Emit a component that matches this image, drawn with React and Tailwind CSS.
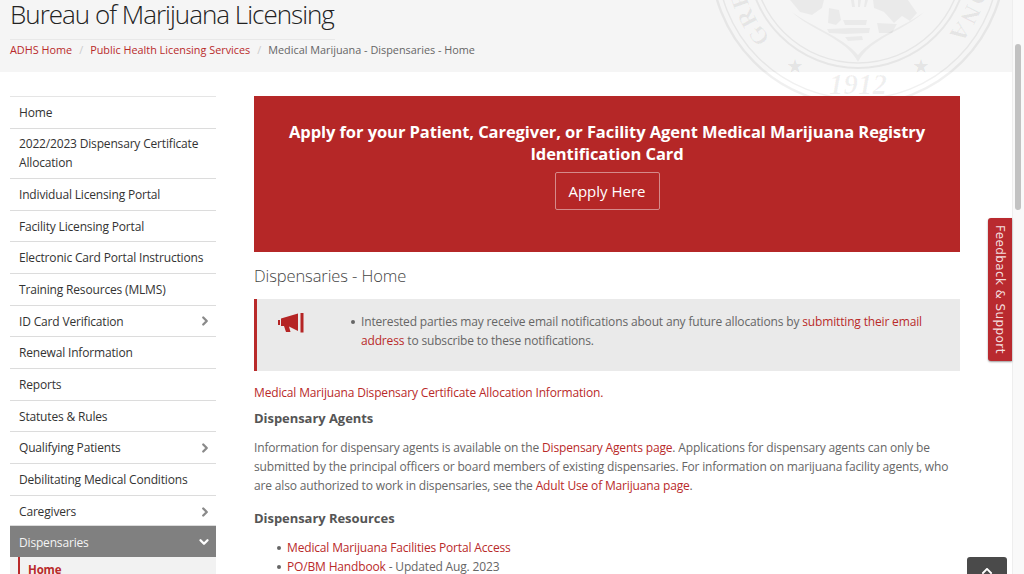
import React from 'react';
import { ChevronRight, ChevronDown } from 'lucide-react';
import { FaChevronUp } from 'react-icons/fa';

const navItems = [
  { label: 'Home', h: 'h-[32px]' },
  { label: '2022/2023 Dispensary Certificate Allocation', h: 'h-[50px] pb-[2px]' },
  { label: 'Individual Licensing Portal', h: 'h-[32px]' },
  { label: 'Facility Licensing Portal', h: 'h-[31px]' },
  { label: 'Electronic Card Portal Instructions', h: 'h-[32px]' },
  { label: 'Training Resources (MLMS)', h: 'h-[32px]' },
  { label: 'ID Card Verification', h: 'h-[31px]', arrow: true },
  { label: 'Renewal Information', h: 'h-[32px]' },
  { label: 'Reports', h: 'h-[32px]' },
  { label: 'Statutes & Rules', h: 'h-[31px]' },
  { label: 'Qualifying Patients', h: 'h-[32px]', arrow: true },
  { label: 'Debilitating Medical Conditions', h: 'h-[32px]' },
  { label: 'Caregivers', h: 'h-[30px] pt-[2px]', arrow: true },
];

// Watermark seal, drawn in page coordinates through the viewBox
const Seal = () => (
  <svg
    className="absolute left-[698px] top-0 pointer-events-none"
    width="314"
    height="96"
    viewBox="698 0 314 96"
    fill="none"
    aria-hidden="true"
  >
    <defs>
      <path id="sealArc" d="M771 38 A118 118 0 1 1 945 38" />
    </defs>
    <g stroke="#000" strokeOpacity="0.06">
      <circle cx="858" cy="-42" r="147" strokeWidth="2.5" />
      <circle cx="858" cy="-42" r="141" strokeWidth="1.5" />
      <circle cx="858" cy="-42" r="110" strokeWidth="2" />
      <circle cx="858" cy="-42" r="105" strokeWidth="1.5" />
    </g>
    <g fill="#000" fillOpacity="0.045">
      <path d="M790 0 L824 0 L822 8 L812 15 L800 12 Z" />
      <path d="M873 0 L908 0 L917 13 L910 21 L902 16 L894 23 L884 12 L874 8 Z" />
      <path d="M829 8 L839 10 L841 20 L836 25 L828 23 Z" />
      <path d="M851 0 L854 0 L855 7 L852 7 Z M858 0 L861 0 L860 7 L858 7 Z M865 0 L868 0 L866 7 L864 7 Z" />
      <path d="M843 20 L867 20 L866 25 L845 25 Z" />
      <path d="M827 29 L850 28 L870 28 L869 33 L845 34 L829 33 Z" />
      <path d="M845 37 L862 36 L863 40 L848 41 Z" />
      <path d="M877 23 L897 24 L892 33 L879 33 Z" />
      <path d="M792 12 C810 30 846 38 858 62 C870 38 906 30 924 12 C906 26 874 36 858 55 C842 36 810 26 792 12 Z" />
    </g>
    <text fontFamily="'Liberation Serif', serif" fontSize="24" fontWeight="700" fill="#000" fillOpacity="0.06">
      <textPath href="#sealArc" textLength="540" lengthAdjust="spacing">GREAT SEAL OF THE STATE OF ARIZONA</textPath>
    </text>
    <text x="858" y="94" textAnchor="middle" fontFamily="'Liberation Serif', serif" fontSize="29" fontWeight="700" fontStyle="italic" fill="#000" fillOpacity="0.06">1912</text>
    <text x="795" y="73" textAnchor="middle" fontFamily="'DejaVu Sans', sans-serif" fontSize="20" fill="#000" fillOpacity="0.07">★</text>
    <text x="921" y="73" textAnchor="middle" fontFamily="'DejaVu Sans', sans-serif" fontSize="20" fill="#000" fillOpacity="0.07">★</text>
  </svg>
);

const Bullhorn = () => (
  <svg width="26" height="20" viewBox="0 0 26 20" fill="#b52525" aria-hidden="true">
    <rect x="0" y="7" width="2" height="5" />
    <path d="M3 5.5 L20 0.5 L20 18 L11 13.5 L12.5 19 L8 19 L6 13 L3 13 Z" />
    <rect x="22.5" y="0" width="3" height="19.5" />
  </svg>
);

const Dot = () => <span className="shrink-0 w-[4px] h-[4px] mt-[8px] mr-[6px] rounded-full bg-[#666]" />;

export default function App() {
  return (
    <div className="relative flex h-[574px] w-[1024px] overflow-hidden bg-white font-['Open_Sans',sans-serif] text-[#555]">
      <div className="w-[1012px] shrink-0">
        {/* Title and breadcrumbs */}
        <header className="h-[72px] bg-[#f5f5f5] px-[10px]">
          <div className="w-[325px] h-[40px] border-b border-[#e8e8e8]">
            <h1 className="text-[26px] leading-[28px] font-light tracking-[-1px] whitespace-nowrap text-[#222]">
              Bureau of Marijuana Licensing
            </h1>
          </div>
          <nav className="flex items-center h-[21px] text-[10.85px] whitespace-nowrap">
            <a className="text-[#b92a2a]">ADHS Home</a>
            <span className="mx-[7px] text-[#ccc]">/</span>
            <a className="text-[#b92a2a]">Public Health Licensing Services</a>
            <span className="mx-[7px] text-[#ccc]">/</span>
            <span className="text-[#666]">Medical Marijuana - Dispensaries - Home</span>
          </nav>
        </header>

        <Seal />

        <div className="relative flex pt-[24px] pl-[10px]">
          {/* Left nav */}
          <aside className="w-[206px] shrink-0 text-[12px] tracking-[-0.17px] leading-[19px] text-[#333]">
            <ul className="border-t border-[#e5e5e5]">
              {navItems.map((item) => (
                <li
                  key={item.label}
                  className={`flex items-center justify-between pl-[9px] pr-[4px] border-b border-[#dcdcdc] ${item.h}`}
                >
                  <span>{item.label}</span>
                  {item.arrow && <ChevronRight size={14} strokeWidth={4} className="text-[#8a8a8a]" />}
                </li>
              ))}
            </ul>
            <div className="flex items-center justify-between h-[31px] pt-[1px] pl-[9px] pr-[5px] bg-[#808080] text-[#f4f4f4]">
              <span>Dispensaries</span>
              <ChevronDown size={14} strokeWidth={4} className="text-white" />
            </div>
            <div className="bg-[#f2f2f2] pl-[8px]">
              <div className="border-l-2 border-[#b92a2a] h-[30px] pl-[8px] pt-[3px] font-bold text-[11.5px] text-[#b92a2a]">
                Home
              </div>
            </div>
          </aside>

          {/* Main content */}
          <main className="ml-[38px] w-[706px] shrink-0 text-[12px] tracking-[-0.16px] leading-[19px]">
            <section className="h-[156px] bg-[#b52727] flex flex-col items-center pt-[25px] text-white">
              <h2 className="w-[680px] text-center text-[16.5px] tracking-[-0.07px] leading-[22px] font-bold">
                Apply for your Patient, Caregiver, or Facility Agent Medical Marijuana Registry Identification Card
              </h2>
              <button className="mt-[7px] w-[105px] h-[38px] border border-[#d58a8a] rounded-[2px] text-[15px] tracking-[0px]">
                Apply Here
              </button>
            </section>

            <h2 className="mt-[13px] text-[16.5px] tracking-[-0.1px] leading-[22px] font-light text-[#444]">Dispensaries - Home</h2>

            <section className="mt-[12px] h-[72px] flex bg-[#eaeaea] border-l-[3px] border-[#b92a2a]">
              <div className="w-[94px] shrink-0 pt-[14px] pl-[21px]">
                <Bullhorn />
              </div>
              <ul className="pt-[13px] pr-[34px] text-[#666]">
                <li className="flex">
                  <Dot />
                  <span>
                    Interested parties may receive email notifications about any future allocations by{' '}
                    <a className="text-[#b92a2a]">submitting their email address</a> to subscribe to these notifications.
                  </span>
                </li>
              </ul>
            </section>

            <p className="mt-[12px] text-[#b92a2a]">Medical Marijuana Dispensary Certificate Allocation Information.</p>

            <h3 className="mt-[6px] text-[13px] leading-[20px] tracking-[-0.05px] font-bold text-[#555]">Dispensary Agents</h3>

            <p className="mt-[10px] text-[#666]">
              Information for dispensary agents is available on the <a className="text-[#b92a2a]">Dispensary Agents page</a>. Applications for dispensary agents can only be submitted by the principal officers or board members of existing dispensaries. For information on marijuana facility agents, who are also authorized to work in dispensaries, see the <a className="text-[#b92a2a]">Adult Use of Marijuana page</a>.
            </p>

            <h3 className="mt-[13px] text-[13px] leading-[20px] tracking-[-0.05px] font-bold text-[#555]">Dispensary Resources</h3>

            <ul className="mt-[10px] pl-[23px] text-[#666]">
              <li className="flex">
                <Dot />
                <a className="text-[#b92a2a]">Medical Marijuana Facilities Portal Access</a>
              </li>
              <li className="flex">
                <Dot />
                <span><a className="text-[#b92a2a]">PO/BM Handbook</a> - Updated Aug. 2023</span>
              </li>
            </ul>
          </main>
        </div>
      </div>

      {/* Browser scrollbar */}
      <div className="w-[12px] h-full bg-[#f9f9f9] border-l border-[#eeeeee] pl-[2px]">
        <div className="mt-[44px] w-[6px] h-[166px] rounded-full bg-[#c2c2c2]" />
      </div>

      {/* Feedback tab */}
      <div className="absolute left-[988px] top-[218px] w-[24px] h-[143px] flex items-center justify-center rounded-l-[3px] bg-[#b92a2f] shadow-[0_1px_2px_rgba(0,0,0,0.4)] text-[#f3dede] text-[12px] tracking-[0.4px] font-['DejaVu_Sans',sans-serif] [writing-mode:vertical-rl] whitespace-nowrap">
        Feedback &amp; Support
      </div>

      {/* Back to top */}
      <div className="absolute left-[967px] top-[557px] w-[40px] h-[30px] flex justify-center pt-[8px] rounded-[3px] bg-[#4a4a4a] text-white text-[12px]">
        <FaChevronUp />
      </div>
    </div>
  );
}
